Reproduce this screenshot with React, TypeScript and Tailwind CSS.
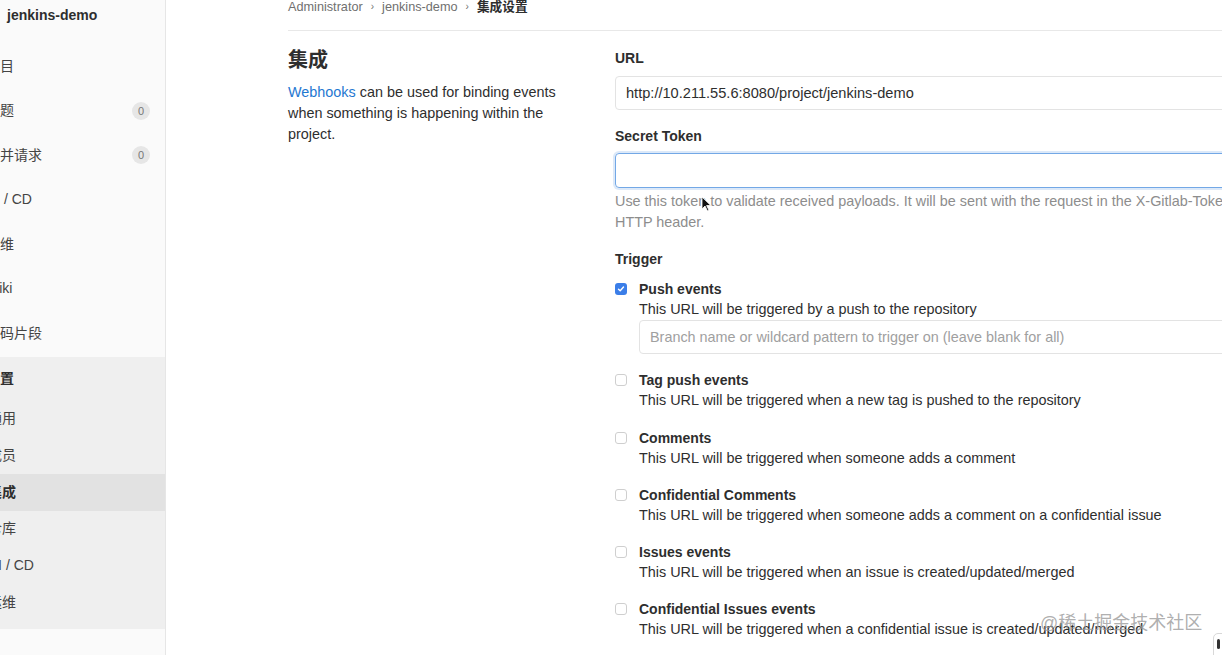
const font = { fontFamily: '"Liberation Sans", "Noto Sans CJK SC", sans-serif' };

type NavItem = { label: string; count?: number };

const topNav: NavItem[] = [
  { label: "项目" },
  { label: "议题", count: 0 },
  { label: "合并请求", count: 0 },
  { label: "CI / CD" },
  { label: "运维" },
  { label: "Wiki" },
  { label: "代码片段" },
];

const settingsNav = [
  { label: "通用" },
  { label: "成员" },
  { label: "集成", active: true },
  { label: "仓库" },
  { label: "CI / CD" },
  { label: "运维" },
];

const triggers = [
  { name: "Push events", desc: "This URL will be triggered by a push to the repository", checked: true, branch: true },
  { name: "Tag push events", desc: "This URL will be triggered when a new tag is pushed to the repository" },
  { name: "Comments", desc: "This URL will be triggered when someone adds a comment" },
  { name: "Confidential Comments", desc: "This URL will be triggered when someone adds a comment on a confidential issue" },
  { name: "Issues events", desc: "This URL will be triggered when an issue is created/updated/merged" },
  { name: "Confidential Issues events", desc: "This URL will be triggered when a confidential issue is created/updated/merged" },
];

function Checkbox({ checked }: { checked?: boolean }) {
  if (checked) {
    return (
      <span className="mt-[4px] flex h-[12px] w-[12px] shrink-0 items-center justify-center rounded-[3px] bg-[#3b7ee8]">
        <svg width="8" height="8" viewBox="0 0 8 8">
          <path d="M1.5 4.2 L3.2 5.8 L6.5 2" stroke="white" strokeWidth="1.4" fill="none" strokeLinecap="round" strokeLinejoin="round" />
        </svg>
      </span>
    );
  }
  return <span className="mt-[4px] h-[12px] w-[12px] shrink-0 rounded-[3px] border border-[#cfcfcf] bg-white" />;
}

function Sidebar() {
  return (
    <aside className="h-full w-[166px] shrink-0 overflow-hidden border-r border-[#e6e6e6] bg-[#fafafa] text-[14px] text-[#444]">
      <div className="flex h-[30px] items-center pl-[7px] font-bold text-[#2e2e2e]">jenkins-demo</div>
      <div className="pt-[14px]">
        {topNav.map((item) => (
          <div key={item.label} className="flex h-[44.5px] items-center justify-between pr-[15px]">
            <span className="ml-[-14px] whitespace-nowrap">{item.label}</span>
            {item.count !== undefined && (
              <span className="flex h-[18px] min-w-[18px] items-center justify-center rounded-full bg-[#e6e6e6] text-[11px] text-[#777]">
                {item.count}
              </span>
            )}
          </div>
        ))}
      </div>
      <div className="mt-[1px] bg-[#efefef] pb-[8px]">
        <div className="flex h-[44px] items-center">
          <span className="ml-[-14px] whitespace-nowrap font-bold text-[#2e2e2e]">设置</span>
        </div>
        {settingsNav.map((item) => (
          <div
            key={item.label + (item.active ? "a" : "")}
            className={`flex h-[36.7px] items-center ${item.active ? "bg-[#e2e2e2] font-bold text-[#2e2e2e]" : ""}`}
          >
            <span className="ml-[-12px] whitespace-nowrap">{item.label}</span>
          </div>
        ))}
      </div>
    </aside>
  );
}

export default function App() {
  return (
    <div className="relative flex h-[655px] w-[1222px] overflow-hidden bg-white" style={font}>
      <Sidebar />
      <main className="min-w-0 flex-1 pl-[122px]">
        <div className="flex h-[31px] items-start gap-[8px] border-b border-[#e8e8e8] text-[12.7px] leading-[14px] text-[#707070]">
          <span>Administrator</span>
          <span className="text-[10px]">›</span>
          <span>jenkins-demo</span>
          <span className="text-[10px]">›</span>
          <span className="font-bold text-[#2e2e2e]">集成设置</span>
        </div>
        <div className="flex pt-[15px]">
          <div className="w-[327px] shrink-0">
            <h2 className="text-[20px] font-bold leading-[28px] text-[#2e2e2e]">集成</h2>
            <p className="mt-[8px] w-[282px] text-[14.4px] leading-[21px] text-[#2e2e2e]">
              <span className="text-[#1f78d1]">Webhooks</span> can be used for binding events when something is happening within the project.
            </p>
          </div>
          <div className="w-[660px] shrink-0 text-[14.4px] text-[#2e2e2e]">
            <div className="mt-[2px] text-[14px] font-bold leading-[20px]">URL</div>
            <div className="mt-[8px] flex h-[34px] items-center rounded-[4px] border border-[#e3e3e3] px-[10px] pt-[2px] text-[14.6px]">
              http://10.211.55.6:8080/project/jenkins-demo
            </div>
            <div className="mt-[16px] text-[14px] font-bold leading-[20px]">Secret Token</div>
            <div className="mt-[7px] h-[35px] rounded-[4px] border border-[#73a8e6] shadow-[0_0_0_2px_rgba(115,168,230,0.25)]" />
            <p className="mt-[3px] w-[632px] leading-[21px] text-[#8d8d8d]">
              Use this token to validate received payloads. It will be sent with the request in the X-Gitlab-Token HTTP header.
            </p>
            <div className="mt-[16px] text-[14px] font-bold leading-[20px]">Trigger</div>
            <div className="mt-[10px]">
              {triggers.map((t) => (
                <div key={t.name} className="mb-[16.3px] flex gap-[12px]">
                  <Checkbox checked={t.checked} />
                  <div className="min-w-0 flex-1">
                    <div className="text-[14px] font-bold leading-[20px]">{t.name}</div>
                    <div className="leading-[21px]">{t.desc}</div>
                    {t.branch && (
                      <div className="flex h-[34px] items-center rounded-[4px] border border-[#e3e3e3] px-[10px] pt-[1px] text-[#a0a0a0]">
                        Branch name or wildcard pattern to trigger on (leave blank for all)
                      </div>
                    )}
                  </div>
                </div>
              ))}
            </div>
          </div>
        </div>
      </main>

      {/* mouse pointer */}
      <svg className="absolute left-[701px] top-[196px]" width="11" height="16" viewBox="0 0 11 16">
        <path d="M1 1 L1 13 L4 10 L6.5 15 L8 14.3 L5.6 9.5 L9.8 9.5 Z" fill="#111" stroke="white" strokeWidth="0.8" />
      </svg>

      {/* watermark */}
      <span className="absolute left-[1040px] top-[612px] whitespace-nowrap text-[18px] leading-[22px] text-[#9a9a9a]/80">
        @稀土掘金技术社区
      </span>
      <div className="absolute left-[1213px] top-[633px] h-[30px] w-[20px] rounded-[5px] border border-[#d8d8d8] bg-white">
        <span className="ml-[3px] mt-[5px] block h-[10px] w-[3px] rounded-sm bg-[#333]" />
      </div>
    </div>
  );
}
